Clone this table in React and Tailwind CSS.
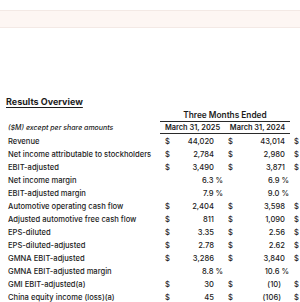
const rows = [
  { label: 'Revenue', a: '44,020', b: '43,014' },
  { label: 'Net income attributable to stockholders', a: '2,784', b: '2,980' },
  { label: 'EBIT-adjusted', a: '3,490', b: '3,871' },
  { label: 'Net income margin', pa: '6.3 %', pb: '6.9 %' },
  { label: 'EBIT-adjusted margin', pa: '7.9 %', pb: '9.0 %' },
  { label: 'Automotive operating cash flow', a: '2,404', b: '3,598' },
  { label: 'Adjusted automotive free cash flow', a: '811', b: '1,090' },
  { label: 'EPS-diluted', a: '3.35', b: '2.56' },
  { label: 'EPS-diluted-adjusted', a: '2.78', b: '2.62' },
  { label: 'GMNA EBIT-adjusted', a: '3,286', b: '3,840' },
  { label: 'GMNA EBIT-adjusted margin', pa: '8.8 %', pb: '10.6 %' },
  { label: 'GMI EBIT-adjusted(a)', a: '30', b: '(10)', bNeg: true },
  { label: 'China equity income (loss)(a)', a: '45', b: '(106)', bNeg: true },
];

function Row({ row }) {
  if (row.pa) {
    return (
      <div className="flex h-[13px] items-center leading-[13px]">
        <div className="w-[165px] shrink-0 pl-[8px] whitespace-nowrap">{row.label}</div>
        <div className="w-[58px] shrink-0 text-right">{row.pa}</div>
        <div className="w-[66px] shrink-0 text-right">{row.pb}</div>
      </div>
    );
  }
  return (
    <div className="flex h-[13px] items-center leading-[13px]">
      <div className="w-[165px] shrink-0 pl-[8px] whitespace-nowrap">{row.label}</div>
      <div className="w-[12px] shrink-0">$</div>
      <div className="w-[37px] shrink-0 text-right">{row.a}</div>
      <div className="w-[14px] shrink-0" />
      <div className="w-[12px] shrink-0">$</div>
      <div className={`w-[45px] shrink-0 text-right ${row.bNeg ? 'pr-[4px]' : ''}`}>{row.b}</div>
      <div className="w-[9px] shrink-0" />
      <div className="shrink-0">$</div>
    </div>
  );
}

export default function App() {
  return (
    <div className="h-[302px] w-[300px] overflow-hidden bg-white pt-[10px] text-[7.6px] font-medium text-[#1c1c1c] font-['Inter','Liberation_Sans',sans-serif]">
      <div className="h-[18px] border-y border-[#f3e9e5] bg-[#fdf6f3]" />

      <div className="mt-[67px] h-[13px] pl-[6px] text-[9px] font-bold leading-[13px] underline underline-offset-[1.5px]">
        Results Overview
      </div>

      <div className="mt-[2px] flex h-[11px] items-center">
        <div className="w-[160px] shrink-0" />
        <div className="w-[130px] shrink-0 border-b border-[#2a2a2a] text-center text-[8.3px] font-semibold leading-[11px]">
          Three Months Ended
        </div>
      </div>

      <div className="flex h-[13px]">
        <div className="flex w-[160px] shrink-0 items-center pl-[8px] pt-[2px] text-[7px] italic">
          ($M) except per share amounts
        </div>
        <div className="flex w-[130px] shrink-0 items-center border-b border-[#2a2a2a] pt-[2px] text-[7.4px] font-semibold">
          <div className="w-[65px] text-center">March 31, 2025</div>
          <div className="w-[65px] text-center">March 31, 2024</div>
        </div>
      </div>

      <div className="pt-[1px]">
        {rows.map((row) => (
          <Row key={row.label} row={row} />
        ))}
      </div>
    </div>
  );
}
